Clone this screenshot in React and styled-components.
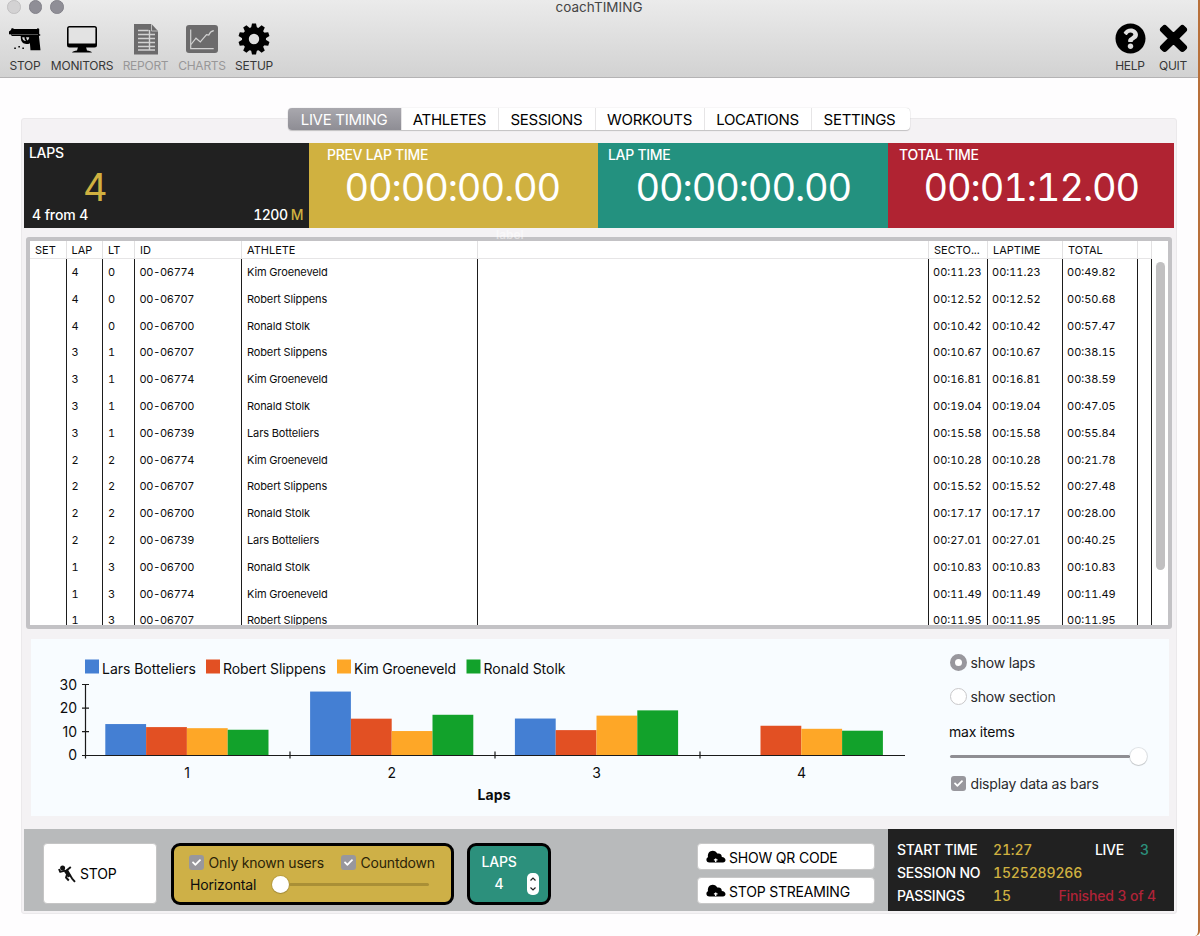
import React, { useState } from 'react';
import styled, { createGlobalStyle } from 'styled-components';
import { FaCheck, FaTimes, FaQuestionCircle } from 'react-icons/fa';

const GlobalStyle = createGlobalStyle`
    * { box-sizing: border-box; }
    body {
        margin: 0;
        background: #fefdfe;
        font-family: Inter, 'Liberation Sans', sans-serif;
        font-variant-numeric: tabular-nums;
        color: #0c0c0d;
        overflow: hidden;
    }
    svg { display: block; flex: none; }
`

const Window = styled.div`
    width: 1200px;
    height: 936px;
    border-right: 2px solid #b8703a;
    border-bottom-right-radius: 5px;
    background: #fefdfe;
    overflow: hidden;
`

/* title bar + toolbar */
const TitleBar = styled.header`
    height: 78px;
    background: linear-gradient(#ebebeb, #d2d2d2);
    border-bottom: 1px solid #b4b3b4;
`
const TitleRow = styled.div`
    height: 14px;
    display: grid;
    grid-template-columns: 101px 1fr 101px;
    align-items: center;
    text-align: center;
    font-size: 13.5px;
    line-height: 14px;
    color: #454545;
    letter-spacing: 0.05px;
`
const Lights = styled.div`
    display: flex;
    gap: 8px;
    padding-left: 7px;
`
const Light = styled.span`
    width: 13.5px;
    height: 13.5px;
    border-radius: 50%;
    border: 1px solid ${(props) => (props.$off ? '#c0bfc0' : '#83828a')};
    background: ${(props) => (props.$off ? '#d3d2d3' : '#8f8e96')};
`
const Toolbar = styled.div`
    display: flex;
    height: 63px;
    padding: 6px 9px 0 9px;
`
const Tool = styled.div`
    width: ${(props) => props.$w}px;
    margin-right: ${(props) => props.$gap || 0}px;
    display: flex;
    flex-direction: column;
    align-items: center;
    font-size: 12px;
    line-height: 16px;
    letter-spacing: -0.25px;
    white-space: nowrap;
    color: ${(props) => (props.$dim ? '#989798' : '#373737')};
`
const ToolIcon = styled.div`
    height: 38px;
    padding-bottom: 1px;
    display: flex;
    align-items: center;
    justify-content: center;
    color: #000;
`
const QuitIcon = styled(FaTimes)`
    stroke: #000;
    stroke-width: 22;
`
const Spacer = styled.div`
    flex: 1;
`

/* tabs */
const Tabs = styled.nav`
    display: flex;
    width: 622px;
    height: 22px;
    margin: 30px 0 0 288px;
    border-radius: 4px;
    background: #fff;
    box-shadow: 0 0 1px #bbb, 0 1px 1px #c4c2c4;
    position: relative;
`
const Tab = styled.button`
    width: ${(props) => props.$w}px;
    padding: 1px 1px 0 0;
    border: none;
    border-right: 1px solid #e6e5e6;
    background: none;
    font: 400 15px/20px Inter, sans-serif;
    letter-spacing: -0.3px;
    color: #000;

    &:last-child { border-right: none; padding-right: 3px; }
    ${(props) => props.$active && `
        background: linear-gradient(#a9a8ae, #8e8d94);
        border-radius: 4px 0 0 4px;
        color: #fff;
    `}
`

const GroupBox = styled.main`
    width: 1156px;
    height: 796px;
    margin: -12px 0 0 21px;
    padding: 24px 2px 0 2px;
    border: 1px solid #ebe9eb;
    border-radius: 3px;
    background: #f4f2f4;
`

/* counters */
const Counters = styled.section`
    display: grid;
    grid-template-columns: 285px 289px 290px 286px;
    height: 85px;
`
const Counter = styled.div`
    padding: ${(props) => props.$pad};
    background: ${(props) => props.$bg};
    color: #fff;
`
const CounterLabel = styled.div`
    font-size: 14px;
    line-height: 17px;
    font-weight: 450;
    letter-spacing: -0.3px;
`
const BigTime = styled.div`
    padding-left: ${(props) => props.$left}px;
    font-size: 38px;
    line-height: 49px;
    letter-spacing: -1.1px;
    white-space: nowrap;
`
const LapCount = styled.div`
    padding-left: 54px;
    font-size: 38px;
    line-height: 53px;
    height: 46px;
    color: #d0b140;
`
const LapFoot = styled.div`
    display: flex;
    justify-content: space-between;
    padding: 0 0 0 3px;
    font-size: 14px;
    font-weight: 450;
    line-height: 16px;
    letter-spacing: -0.1px;
`
const Distance = styled.span`
    letter-spacing: -0.5px;
`
const Accent = styled.span`
    color: #d0b140;
`

/* results table */
const TableFrame = styled.section`
    position: relative;
    width: 1146px;
    height: 392px;
    margin: 9px 0 0 2px;
    border: 4px solid #c3c2c5;
    border-radius: 3px;
    background: #fff;
    display: flex;
`
const GhostLabel = styled.span`
    position: absolute;
    left: 466px;
    top: -13px;
    font-size: 12px;
    line-height: 14px;
    font-weight: 600;
    color: rgba(255, 255, 255, 0.5);
`
const Column = styled.div`
    width: ${(props) => props.$w}px;
    flex: none;
    overflow: hidden;
`
const HeadCell = styled.div`
    height: 18px;
    padding-left: 5px;
    border-right: 1px solid #e2e1e2;
    border-bottom: 1px solid #e6e5e6;
    font-size: 11px;
    line-height: 18px;
    white-space: nowrap;
`
const ColumnBody = styled.div`
    height: 366px;
    padding-left: ${(props) => props.$pad || 5}px;
    border-right: 1.5px solid #1d1d1d;
    font-size: 11px;
    font-weight: 430;
    letter-spacing: ${(props) => props.$ls || 0}px;
    white-space: nowrap;
`
const Cell = styled.div`
    height: 26.8px;
    line-height: 27px;
`
const ScrollTrack = styled.div`
    flex: 1;
    padding: 21px 0 0 4px;
`
const ScrollThumb = styled.div`
    width: 9px;
    height: 308px;
    border-radius: 5px;
    background: #c1c0c1;
`

/* chart */
const ChartPanel = styled.section`
    display: flex;
    width: 1138px;
    height: 177px;
    margin: 10px 0 0 7px;
    background: #f8fcff;
`
const ChartText = styled.text`
    font: ${(props) => (props.$bold ? 700 : 400)} 14px Inter, sans-serif;
    fill: #0c0c0d;
`
const Options = styled.div`
    width: 219px;
    padding-top: 14px;
    font-size: 14px;
`
const Option = styled.div`
    display: flex;
    align-items: center;
    gap: 3.5px;
    height: 18px;
    margin: 0 ${(props) => props.$right || 0}px ${(props) => props.$below || 0}px ${(props) => props.$left || 0}px;
    letter-spacing: -0.17px;
    color: ${(props) => props.$color || '#2a2a2c'};
    white-space: nowrap;
`
const Radio = styled.span`
    width: 17px;
    height: 17px;
    border-radius: 50%;
    border: ${(props) => (props.$on ? '5.5px solid #98979d' : '1px solid #c9c8ca')};
    background: #fff;
`
const CheckBox = styled.span`
    display: flex;
    align-items: center;
    justify-content: center;
    width: 15px;
    height: 15px;
    margin: 0 1px;
    border-radius: 3px;
    background: #98979d;
    color: #fff;
`
const Slider = styled.div`
    display: flex;
    align-items: center;
    flex-direction: ${(props) => (props.$atStart ? 'row-reverse' : 'row')};
    width: ${(props) => props.$w}px;
    height: 18px;
    margin: 0 0 ${(props) => props.$below || 0}px ${(props) => props.$left || 0}px;
`
const SliderTrack = styled.div`
    flex: 1;
    height: 3px;
    border-radius: 2px;
    background: ${(props) => props.$color};
`
const SliderKnob = styled.div`
    width: 17px;
    height: 17px;
    border-radius: 50%;
    background: #fff;
    box-shadow: 0 0 0 1px rgba(0, 0, 0, 0.1), 0 1px 1px rgba(0, 0, 0, 0.12);
`

/* bottom bar */
const Footer = styled.footer`
    display: flex;
    height: 82px;
    margin-top: 13px;
    background: #b8babb;
`
const StopButton = styled.button`
    display: flex;
    align-items: center;
    gap: 4px;
    width: 114px;
    height: 61px;
    margin: 14px 0 0 19px;
    padding: 0 0 0 14px;
    border: 1px solid #c5c5c5;
    border-radius: 4px;
    background: #fff;
    font: 400 14px Inter, sans-serif;
    letter-spacing: -0.2px;
    color: #000;
`
const Box = styled.div`
    width: ${(props) => props.$w}px;
    height: 62px;
    margin: 14px 0 0 ${(props) => props.$left}px;
    padding-top: 5px;
    border: 3px solid #000;
    border-radius: 9px;
    background: ${(props) => props.$bg};
`
const BoxRow = styled.div`
    display: flex;
    align-items: center;
    height: 22px;
    padding-left: ${(props) => props.$left || 14.5}px;
    font-size: 14px;
    letter-spacing: -0.15px;
    white-space: nowrap;
`
const LapsBox = styled(Box)`
    display: grid;
    grid-template-columns: 42px 1fr;
    grid-template-rows: 22px 22px;
    padding: 5px 0 0 12px;
    font-size: 14px;
    font-weight: 450;
    line-height: 22px;
    letter-spacing: -0.2px;
    color: #fff;
`
const LapsValue = styled.div`
    padding-left: 13px;
`
const Stepper = styled.div`
    width: 12px;
    height: 22px;
    margin: 0 0 0 3px;
    border-radius: 5px;
    background: #fff;
`
const StreamButtons = styled.div`
    display: flex;
    flex-direction: column;
    gap: 7px;
    margin: 14px 13px 0 auto;
`
const StreamButton = styled.button`
    display: flex;
    align-items: center;
    gap: 3px;
    width: 178px;
    height: 27px;
    padding: 1px 0 0 8px;
    border: 1px solid #c8c8c8;
    border-radius: 4px;
    background: #fff;
    font: 400 14px Inter, sans-serif;
    letter-spacing: -0.2px;
    color: #000;
`
const Status = styled.div`
    display: grid;
    grid-template-columns: 96px 60px 1fr 32px;
    grid-template-rows: 23px 22px 25px;
    align-items: center;
    width: 286px;
    padding: 9px 18px 0 9px;
    background: #212121;
    font-size: 14px;
    font-weight: 450;
    white-space: nowrap;
`
const StatusItem = styled.span`
    grid-column: ${(props) => props.$col || 'auto'};
    justify-self: ${(props) => (props.$end ? 'end' : 'start')};
    margin-right: ${(props) => props.$right || 0}px;
    color: ${(props) => props.$color || '#fff'};
    letter-spacing: ${(props) => (props.$color ? -0.15 : -0.25)}px;
`

function GunIcon() {
    return (
        <svg width="32" height="24" viewBox="0 0 32 24">
            <path d="M0 4.5 2 3l.6-1.8h1.600L4.800 2H28l.8-1 1.400 1v5.200h1v1.600h-1.300l1.600 14.500H21.500l-.6-7c-.8.900-3 .8-4.800.4-2.600-.5-4.100-2.300-4.200-5L11.700 9H2.600L2.300 7.500 0 7.200Z" fill="#000" />
            <path d="M13.200 10.200h2.300c0 1.700.5 2.800 1.600 3.700-2.300.1-3.800-1.300-3.900-3.700ZM17 10.200h3.200c0 1.600-.8 2.800-2 3.200Z" fill="#d8d8d8" />
            <path d="M3 7.500h26" stroke="#888" strokeWidth=".6" />
            <path d="M5.200 21.300h1.700M9.300 19.700H11M13.300 21.300H15" stroke="#111" strokeWidth="1.6" />
        </svg>
    );
}

function MonitorIcon() {
    return (
        <svg width="32" height="30" viewBox="0 0 32 30">
            <rect x="1" y="2" width="30" height="21.5" rx="2.5" fill="#000" />
            <rect x="2.6" y="3.6" width="26.8" height="16" rx=".6" fill="#e3e3e3" />
            <path d="M12 23h8l1 3.4c2 .3 4.5.8 5 2H6c.5-1.2 3-1.7 5-2Z" fill="#000" />
        </svg>
    );
}

function ReportIcon() {
    return (
        <svg width="26" height="32" viewBox="0 0 26 32">
            <path d="M1 1h17.5l6.5 7v23.5H1Z" fill="#6c6b6c" />
            <path d="M18.5 1v7H25" fill="none" stroke="#bdbdbd" />
            <path d="M5 7.500h10.500M5 11.500h17M5 15.500h17M5 19.500h17M5 23.500h17M5 27h17M16.500 7v20.500" fill="none" stroke="#d2d2d2" strokeWidth="1.4" />
        </svg>
    );
}

function ChartsIcon() {
    return (
        <svg width="32" height="28" viewBox="0 0 32 28">
            <rect width="32" height="28" rx="3" fill="#6c6b6c" />
            <path d="M4.7 4.5v19.2h23" fill="none" stroke="#d2d2d2" strokeWidth="1.2" />
            <path d="m5 19.5 5-6.3 4.3 3.8 6.2-7.4 2.3.4c1-2.6 3-3.9 5-4.3" fill="none" stroke="#d2d2d2" strokeWidth="1.2" />
        </svg>
    );
}

function GearIcon() {
    return (
        <svg width="32" height="32" viewBox="-16 -16 32 32">
            <circle r="8.6" fill="none" stroke="#000" strokeWidth="6.8" />
            {[...Array(10)].map((_, i) => (
                <path key={i} d="M-3-11-2-15.6H2L3-11Z" transform={`rotate(${i * 36})`} fill="#000" />
            ))}
        </svg>
    );
}

function RunnerIcon() {
    return (
        <svg width="18" height="18" viewBox="0 0 18 18">
            <circle cx="4.6" cy="3" r="2.5" fill="#111" />
            <path d="M9.500 8.500 12.500 11l1.600 2.600 2.900 3.200M9 9.500 8 12.500l2.800 3M8.500 5.500l4.300-3.600M6 5.800 2.200 6.800 1 4" fill="none" stroke="#111" strokeWidth="1.9" strokeLinejoin="round" />
            <path d="m5 5 5-.2 3.400 5.600L10 12.500Z" fill="#111" />
        </svg>
    );
}

function CloudIcon() {
    return (
        <svg width="20" height="14" viewBox="0 0 20 14">
            <path d="M3.500 12.500C1.400 12.400.4 11.200.4 9.700c0-1.400.9-2.300 1.600-2.500C1.300 3.600 3.600.8 6.600.8c2.300 0 3.800 1.100 4.700 2.800 2.600-.8 4.800 1 4.500 3.500 2.200.2 3.700 1.400 3.700 3 0 1.500-1 2.400-2.500 2.400Z" fill="#000" />
            <path d="M9.700 12V8.500M7.900 9.800h3.600" fill="none" stroke="#fff" strokeWidth="1.3" />
        </svg>
    );
}

const TABS = [
    { name: 'LIVE TIMING', w: 114 },
    { name: 'ATHLETES', w: 97 },
    { name: 'SESSIONS', w: 97 },
    { name: 'WORKOUTS', w: 109 },
    { name: 'LOCATIONS', w: 107 },
    { name: 'SETTINGS', w: 98 },
];

const TIMERS = [
    { name: 'PREV LAP TIME', time: '00:00:00.00', bg: '#d0b140', pad: '3px 0 0 18px', left: 17.5 },
    { name: 'LAP TIME', time: '00:00:00.00', bg: '#23917f', pad: '3px 0 0 10px', left: 27.5 },
    { name: 'TOTAL TIME', time: '00:01:12.00', bg: '#b02332', pad: '3px 0 0 11px', left: 24.5 },
];

const PASSINGS = [
    [4, 0, '00-06774', 'Kim Groeneveld', '00:11.23', '00:49.82'],
    [4, 0, '00-06707', 'Robert Slippens', '00:12.52', '00:50.68'],
    [4, 0, '00-06700', 'Ronald Stolk', '00:10.42', '00:57.47'],
    [3, 1, '00-06707', 'Robert Slippens', '00:10.67', '00:38.15'],
    [3, 1, '00-06774', 'Kim Groeneveld', '00:16.81', '00:38.59'],
    [3, 1, '00-06700', 'Ronald Stolk', '00:19.04', '00:47.05'],
    [3, 1, '00-06739', 'Lars Botteliers', '00:15.58', '00:55.84'],
    [2, 2, '00-06774', 'Kim Groeneveld', '00:10.28', '00:21.78'],
    [2, 2, '00-06707', 'Robert Slippens', '00:15.52', '00:27.48'],
    [2, 2, '00-06700', 'Ronald Stolk', '00:17.17', '00:28.00'],
    [2, 2, '00-06739', 'Lars Botteliers', '00:27.01', '00:40.25'],
    [1, 3, '00-06700', 'Ronald Stolk', '00:10.83', '00:10.83'],
    [1, 3, '00-06774', 'Kim Groeneveld', '00:11.49', '00:11.49'],
    [1, 3, '00-06707', 'Robert Slippens', '00:11.95', '00:11.95'],
];

const COLUMNS = [
    { head: 'SET', w: 36.5 },
    { head: 'LAP', w: 36.5, field: 0 },
    { head: 'LT', w: 32, field: 1 },
    { head: 'ID', w: 107, field: 2, ls: -0.3, pad: 4.5 },
    { head: 'ATHLETE', w: 236, field: 3, ls: -0.13 },
    { head: '', w: 451 },
    { head: 'SECTO...', w: 59, field: 4, pad: 4 },
    { head: 'LAPTIME', w: 75, field: 4, pad: 4 },
    { head: 'TOTAL', w: 75, field: 5, pad: 4 },
    { head: '', w: 14 },
];

const SERIES = [
    { name: 'Lars Botteliers', color: '#447fd3', x: 54, w: 94, laps: [13.24, 27.01, 15.58, 0] },
    { name: 'Robert Slippens', color: '#e25023', x: 175, w: 103, laps: [11.95, 15.52, 10.67, 12.52] },
    { name: 'Kim Groeneveld', color: '#fea727', x: 306, w: 102, laps: [11.49, 10.28, 16.81, 11.23] },
    { name: 'Ronald Stolk', color: '#12a22b', x: 435.5, w: 82, laps: [10.83, 17.17, 19.04, 10.42] },
];

function LapChart() {
    const base = 116.3;
    const unit = 2.36;
    const step = 204.8;
    return (
        <svg width="919" height="177" viewBox="0 0 919 177">
            {SERIES.map((s) => (
                <g key={s.name}>
                    <rect x={s.x} y="20.5" width="14" height="14" fill={s.color} />
                    <ChartText x={s.x + 17} y="34.5" textLength={s.w}>{s.name}</ChartText>
                </g>
            ))}
            {SERIES.map((s, i) => s.laps.map((v, lap) => (
                <rect key={s.name + lap} x={74.3 + i * 40.8 + lap * step} y={base - v * unit} width="40.8" height={v * unit} fill={s.color} />
            )))}
            <path d="M54.500 45.500v74M51 45.500h7M51 69.100h7M51 92.700h7M51 116.500h823M259 112.500v7M464 112.500v7M669 112.500v7" fill="none" stroke="#1a1a1a" strokeWidth="1.2" />
            {[30, 20, 10, 0].map((v, i) => (
                <ChartText key={v} x="46" y={50.5 + i * 23.6} textAnchor="end">{v}</ChartText>
            ))}
            {[1, 2, 3, 4].map((lap, i) => (
                <ChartText key={lap} x={156 + i * step} y="138.5" textAnchor="middle">{lap}</ChartText>
            ))}
            <ChartText $bold x="463" y="161" textAnchor="middle" textLength="33">Laps</ChartText>
        </svg>
    );
}

function App() {
    const [tab, setTab] = useState('LIVE TIMING');

    return (
        <Window>
            <GlobalStyle />
            <TitleBar>
                <TitleRow>
                    <Lights><Light $off /><Light /><Light /></Lights>
                    <span>coachTIMING</span>
                </TitleRow>
                <Toolbar>
                    <Tool $w={32} $gap={9}><ToolIcon><GunIcon /></ToolIcon>STOP</Tool>
                    <Tool $w={64} $gap={8}><ToolIcon><MonitorIcon /></ToolIcon>MONITORS</Tool>
                    <Tool $w={47} $gap={9} $dim><ToolIcon><ReportIcon /></ToolIcon>REPORT</Tool>
                    <Tool $w={48} $gap={9} $dim><ToolIcon><ChartsIcon /></ToolIcon>CHARTS</Tool>
                    <Tool $w={38}><ToolIcon><GearIcon /></ToolIcon>SETUP</Tool>
                    <Spacer />
                    <Tool $w={32} $gap={11}><ToolIcon><FaQuestionCircle size={31} /></ToolIcon>HELP</Tool>
                    <Tool $w={32}><ToolIcon><QuitIcon size={37} /></ToolIcon>QUIT</Tool>
                </Toolbar>
            </TitleBar>

            <Tabs>
                {TABS.map((t) => (
                    <Tab key={t.name} $w={t.w} $active={tab === t.name} onClick={() => setTab(t.name)}>
                        {t.name}
                    </Tab>
                ))}
            </Tabs>

            <GroupBox>
                <Counters>
                    <Counter $bg="#212121" $pad="1px 6px 0 5px">
                        <CounterLabel>LAPS</CounterLabel>
                        <LapCount>4</LapCount>
                        <LapFoot><span>4 from 4</span><Distance>1200 <Accent>M</Accent></Distance></LapFoot>
                    </Counter>
                    {TIMERS.map((t) => (
                        <Counter key={t.name} $bg={t.bg} $pad={t.pad}>
                            <CounterLabel>{t.name}</CounterLabel>
                            <BigTime $left={t.left}>{t.time}</BigTime>
                        </Counter>
                    ))}
                </Counters>

                <TableFrame>
                    <GhostLabel>label</GhostLabel>
                    {COLUMNS.map((c, i) => (
                        <Column key={i} $w={c.w}>
                            <HeadCell>{c.head}</HeadCell>
                            <ColumnBody $ls={c.ls} $pad={c.pad}>
                                {c.field !== undefined && PASSINGS.map((row, n) => <Cell key={n}>{row[c.field]}</Cell>)}
                            </ColumnBody>
                        </Column>
                    ))}
                    <ScrollTrack><ScrollThumb /></ScrollTrack>
                </TableFrame>

                <ChartPanel>
                    <LapChart />
                    <Options>
                        <Option $below={16}><Radio $on />show laps</Option>
                        <Option $below={17}><Radio />show section</Option>
                        <Option $below={7} $left={-1} $color="#0c0c0d">max items</Option>
                        <Slider $w={197} $below={9}><SliderTrack $color="#8f8e93" /><SliderKnob /></Slider>
                        <Option><CheckBox><FaCheck size={9} /></CheckBox>display data as bars</Option>
                    </Options>
                </ChartPanel>

                <Footer>
                    <StopButton><RunnerIcon />STOP</StopButton>
                    <Box $w={283} $left={13.5} $bg="#ceb047">
                        <BoxRow>
                            <Option $color="#2c2408" $right={16}><CheckBox><FaCheck size={9} /></CheckBox>Only known users</Option>
                            <Option $color="#2c2408"><CheckBox><FaCheck size={9} /></CheckBox>Countdown</Option>
                        </BoxRow>
                        <BoxRow $left={16.5}>
                            Horizontal
                            <Slider $w={157} $left={15.5} $atStart><SliderTrack $color="#a98f36" /><SliderKnob /></Slider>
                        </BoxRow>
                    </Box>
                    <LapsBox $w={84} $left={13} $bg="#2c907c">
                        <span>LAPS</span><span />
                        <LapsValue>4</LapsValue>
                        <Stepper>
                            <svg width="12" height="22" viewBox="0 0 12 22">
                                <path d="m3.500 7.500 2.500-2.500 2.500 2.500M3.500 14.500 6 17l2.500-2.500" fill="none" stroke="#222" strokeWidth="1.2" />
                            </svg>
                        </Stepper>
                    </LapsBox>
                    <StreamButtons>
                        <StreamButton><CloudIcon />SHOW QR CODE</StreamButton>
                        <StreamButton><CloudIcon />STOP STREAMING</StreamButton>
                    </StreamButtons>
                    <Status>
                        <StatusItem>START TIME</StatusItem>
                        <StatusItem $color="#d0b140">21:27</StatusItem>
                        <StatusItem $end>LIVE</StatusItem>
                        <StatusItem $color="#2c907c" $end $right={7}>3</StatusItem>
                        <StatusItem>SESSION NO</StatusItem>
                        <StatusItem $color="#d0b140" $col="2 / 5">1525289266</StatusItem>
                        <StatusItem>PASSINGS</StatusItem>
                        <StatusItem $color="#d0b140">15</StatusItem>
                        <StatusItem $color="#b02338" $col="3 / 5" $end>Finished 3 of 4</StatusItem>
                    </Status>
                </Footer>
            </GroupBox>
        </Window>
    );
}

export default App;
